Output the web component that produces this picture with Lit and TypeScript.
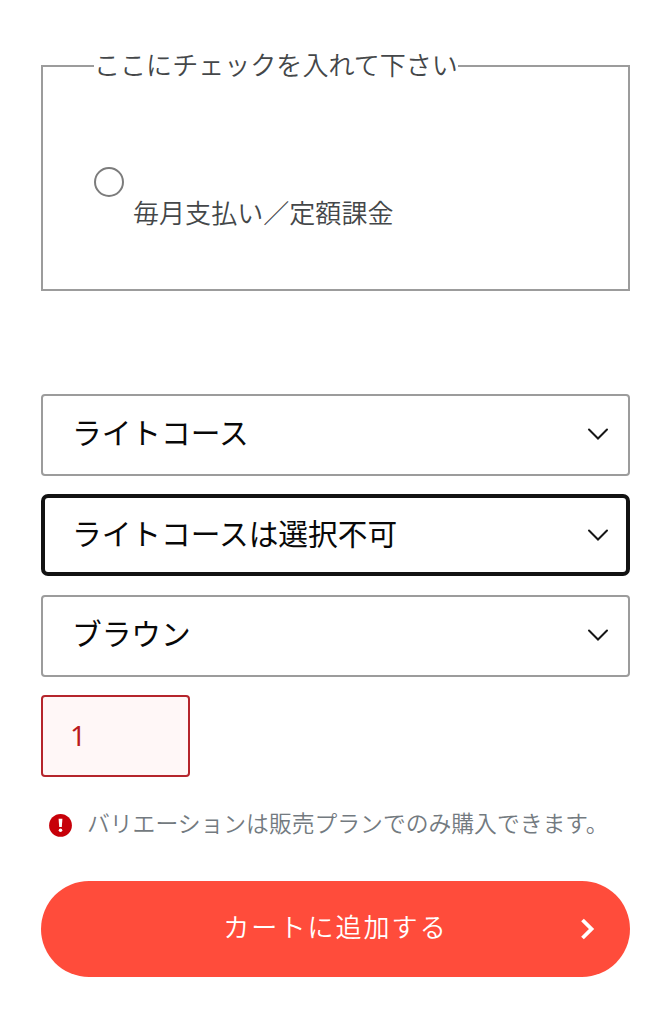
import { LitElement, html, css } from "lit";
import { customElement, property } from "lit/decorators.js";

@customElement("select-box")
class SelectBox extends LitElement {
  @property() value = "";
  @property({ type: Boolean, reflect: true }) active = false;

  static styles = css`
    :host { display: block; height: 82px; }
    .box {
      box-sizing: border-box;
      width: 100%;
      height: 100%;
      display: flex;
      align-items: center;
      justify-content: space-between;
      margin: 0;
      padding: 0 18.6px 2px 29px;
      border: 2px solid #9c9c9c;
      border-radius: 4px;
      background: #fff;
      color: #080808;
      font: inherit;
      font-size: 29.7px;
      line-height: 40px;
    }
    :host([active]) .box {
      border: 4px solid #121212;
      border-radius: 7px;
      padding: 0 16.6px 2px 27px;
    }
    .text { padding-bottom: 3px; }
    .chevron { display: block; margin-top: 1px; }
  `;

  render() {
    return html`
      <button class="box" type="button" aria-haspopup="listbox">
        <span class="text">${this.value}</span>
        <svg class="chevron" width="22" height="14" viewBox="0 0 22 14" fill="none"
          stroke="#161616" stroke-width="2" stroke-linecap="round">
          <path d="M2 2.5 L11 11.5 L20 2.5" />
        </svg>
      </button>
    `;
  }
}

@customElement("app-root")
class AppRoot extends LitElement {
  static styles = css`
    :host {
      display: block;
      box-sizing: border-box;
      min-height: 1024px;
      padding: 46px 41px 0;
      background: #fff;
      color: #444749;
      font-family: "Noto Sans CJK JP", sans-serif;
      font-size: 26.05px;
      line-height: 40px;
    }
    .plan {
      box-sizing: border-box;
      height: 245px;
      min-width: 0;
      margin: 0;
      padding: 0 51px;
      border: 2px solid #9c9c9c;
    }
    .plan legend { padding: 0; margin: 0; height: 40px; line-height: 36px; white-space: nowrap; }
    .choice { display: flex; align-items: flex-start; gap: 9px; padding-top: 81px; }
    .radio {
      box-sizing: border-box;
      width: 30px;
      height: 30px;
      border: 2px solid #7c7c7c;
      border-radius: 50%;
    }
    .label { padding-top: 25px; }
    .fields { display: grid; gap: 18.6px; margin-top: 102.7px; }
    .quantity {
      box-sizing: border-box;
      width: 149px;
      height: 82px;
      padding: 18px 27px;
      border: 2px solid #b5252c;
      border-radius: 4px;
      background: #fff7f7;
      color: #ba1a20;
      font-family: "Noto Sans", sans-serif;
      font-size: 28px;
    }
    .error {
      display: flex;
      align-items: center;
      height: 40px;
      gap: 15px;
      margin-top: 27.3px;
      padding-left: 8px;
      color: #737a80;
      font-size: 22.8px;
      white-space: nowrap;
    }
    .error-text { padding-bottom: 4px; }
    .cart {
      box-sizing: border-box;
      display: grid;
      grid-template-columns: 1fr auto 1fr;
      align-items: center;
      width: 100%;
      height: 96px;
      margin: 36px 0 0;
      padding: 0 35px;
      border: 0;
      border-radius: 48px;
      background: #ff4c3b;
      color: #fff;
      font: inherit;
      letter-spacing: 2px;
    }
    .cart-text { grid-column: 2; padding-bottom: 5px; }
    .arrow { justify-self: end; }
    .plan, .error, .cart { font-weight: 350; }
  `;

  render() {
    return html`
      <fieldset class="plan">
        <legend>ここにチェックを入れて下さい</legend>
        <div class="choice">
          <span class="radio" role="radio" aria-checked="false"></span>
          <span class="label">毎月支払い／定額課金</span>
        </div>
      </fieldset>
      <div class="fields">
        <select-box value="ライトコース"></select-box>
        <select-box value="ライトコースは選択不可" active></select-box>
        <select-box value="ブラウン"></select-box>
        <div class="quantity" role="spinbutton">1</div>
      </div>
      <div class="error">
        <svg class="error-icon" width="23" height="24" viewBox="0 0 23 24">
          <circle cx="11.5" cy="12.4" r="11.4" fill="#c70009" />
          <path d="M9.6 5.7 H13.4 L12.8 14.1 H10.2 Z" fill="#fff" />
          <circle cx="11.5" cy="17.2" r="1.8" fill="#fff" />
        </svg>
        <span class="error-text">バリエーションは販売プランでのみ購入できます。</span>
      </div>
      <button class="cart" type="button">
        <span class="cart-text">カートに追加する</span>
        <svg class="arrow" width="16" height="22" viewBox="0 0 16 22" fill="none"
          stroke="#fff" stroke-width="3.8">
          <path d="M3.5 2 L12.5 11 L3.5 20" />
        </svg>
      </button>
    `;
  }
}
